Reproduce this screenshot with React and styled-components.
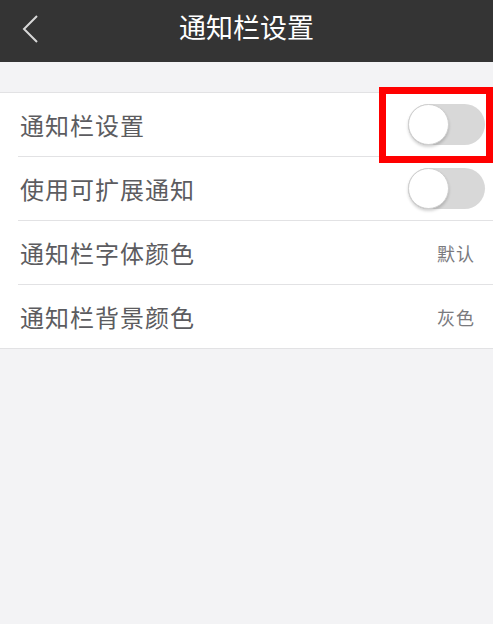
import React from "react";
import styled, { createGlobalStyle } from "styled-components";

const Global = createGlobalStyle`
  html, body { margin: 0; padding: 0; background: #f3f3f5; }
  body { font-family: "Noto Sans CJK SC", "Noto Sans", sans-serif; }
  #root { min-height: 624px; }
`;

const Page = styled.div`
  width: 493px;
  height: 624px;
  background: #f3f3f5;
  display: flex;
  flex-direction: column;
  overflow: hidden;
`;

const Header = styled.header`
  height: 62px;
  background: #343434;
  display: grid;
  grid-template-columns: 60px 1fr 60px;
  align-items: center;
  flex-shrink: 0;
`;

const Back = styled.div`
  display: flex;
  align-items: center;
  padding-left: 21px;
  padding-bottom: 4px;
  height: 100%;
  box-sizing: border-box;
`;

const Title = styled.h1`
  margin: 0;
  text-align: center;
  color: #ffffff;
  font-size: 27px;
  font-weight: 400;
  line-height: 1;
  padding-bottom: 9px;
`;

const List = styled.div`
  margin-top: 30px;
  background: #ffffff;
  border-top: 1px solid #e2e2e4;
  border-bottom: 1px solid #e2e2e4;
`;

const Row = styled.div`
  height: 63px;
  margin-left: 18px;
  padding-right: 8px;
  display: flex;
  align-items: center;
  justify-content: space-between;
  border-bottom: ${(p) => (p.$last ? "none" : "1px solid #e2e2e4")};
  position: relative;
`;

const Label = styled.span`
  font-size: 24px;
  color: #5c5c60;
  letter-spacing: 1px;
  padding-left: 2px;
`;

const Value = styled.span`
  font-size: 18px;
  color: #7a7a7e;
  margin-right: 10px;
  letter-spacing: 1px;
`;

const Track = styled.div`
  width: 77px;
  height: 41px;
  border-radius: 21px;
  background: #d8d8d8;
  position: relative;
  flex-shrink: 0;
`;

const Knob = styled.div`
  position: absolute;
  left: 0;
  top: 0;
  width: 41px;
  height: 41px;
  border-radius: 50%;
  background: #ffffff;
  box-sizing: border-box;
  border: 1px solid #cfcfcf;
  box-shadow: 0 2px 3px rgba(0, 0, 0, 0.18);
`;

const Highlight = styled.div`
  position: absolute;
  right: 0;
  top: -6px;
  width: 114px;
  height: 76px;
  box-sizing: border-box;
  border: 7px solid #ff0000;
  pointer-events: none;
`;

const Toggle = () => (
  <Track>
    <Knob />
  </Track>
);

export default function App() {
  return (
    <>
      <Global />
      <Page>
        <Header>
          <Back>
            <svg width="18" height="30" viewBox="0 0 18 30">
              <path d="M16 2 L3 15 L16 28" fill="none" stroke="#d8d8d8" strokeWidth="2" />
            </svg>
          </Back>
          <Title>通知栏设置</Title>
          <div />
        </Header>
        <List>
          <Row>
            <Label>通知栏设置</Label>
            <Toggle />
            <Highlight />
          </Row>
          <Row>
            <Label>使用可扩展通知</Label>
            <Toggle />
          </Row>
          <Row>
            <Label>通知栏字体颜色</Label>
            <Value>默认</Value>
          </Row>
          <Row $last>
            <Label>通知栏背景颜色</Label>
            <Value>灰色</Value>
          </Row>
        </List>
      </Page>
    </>
  );
}
